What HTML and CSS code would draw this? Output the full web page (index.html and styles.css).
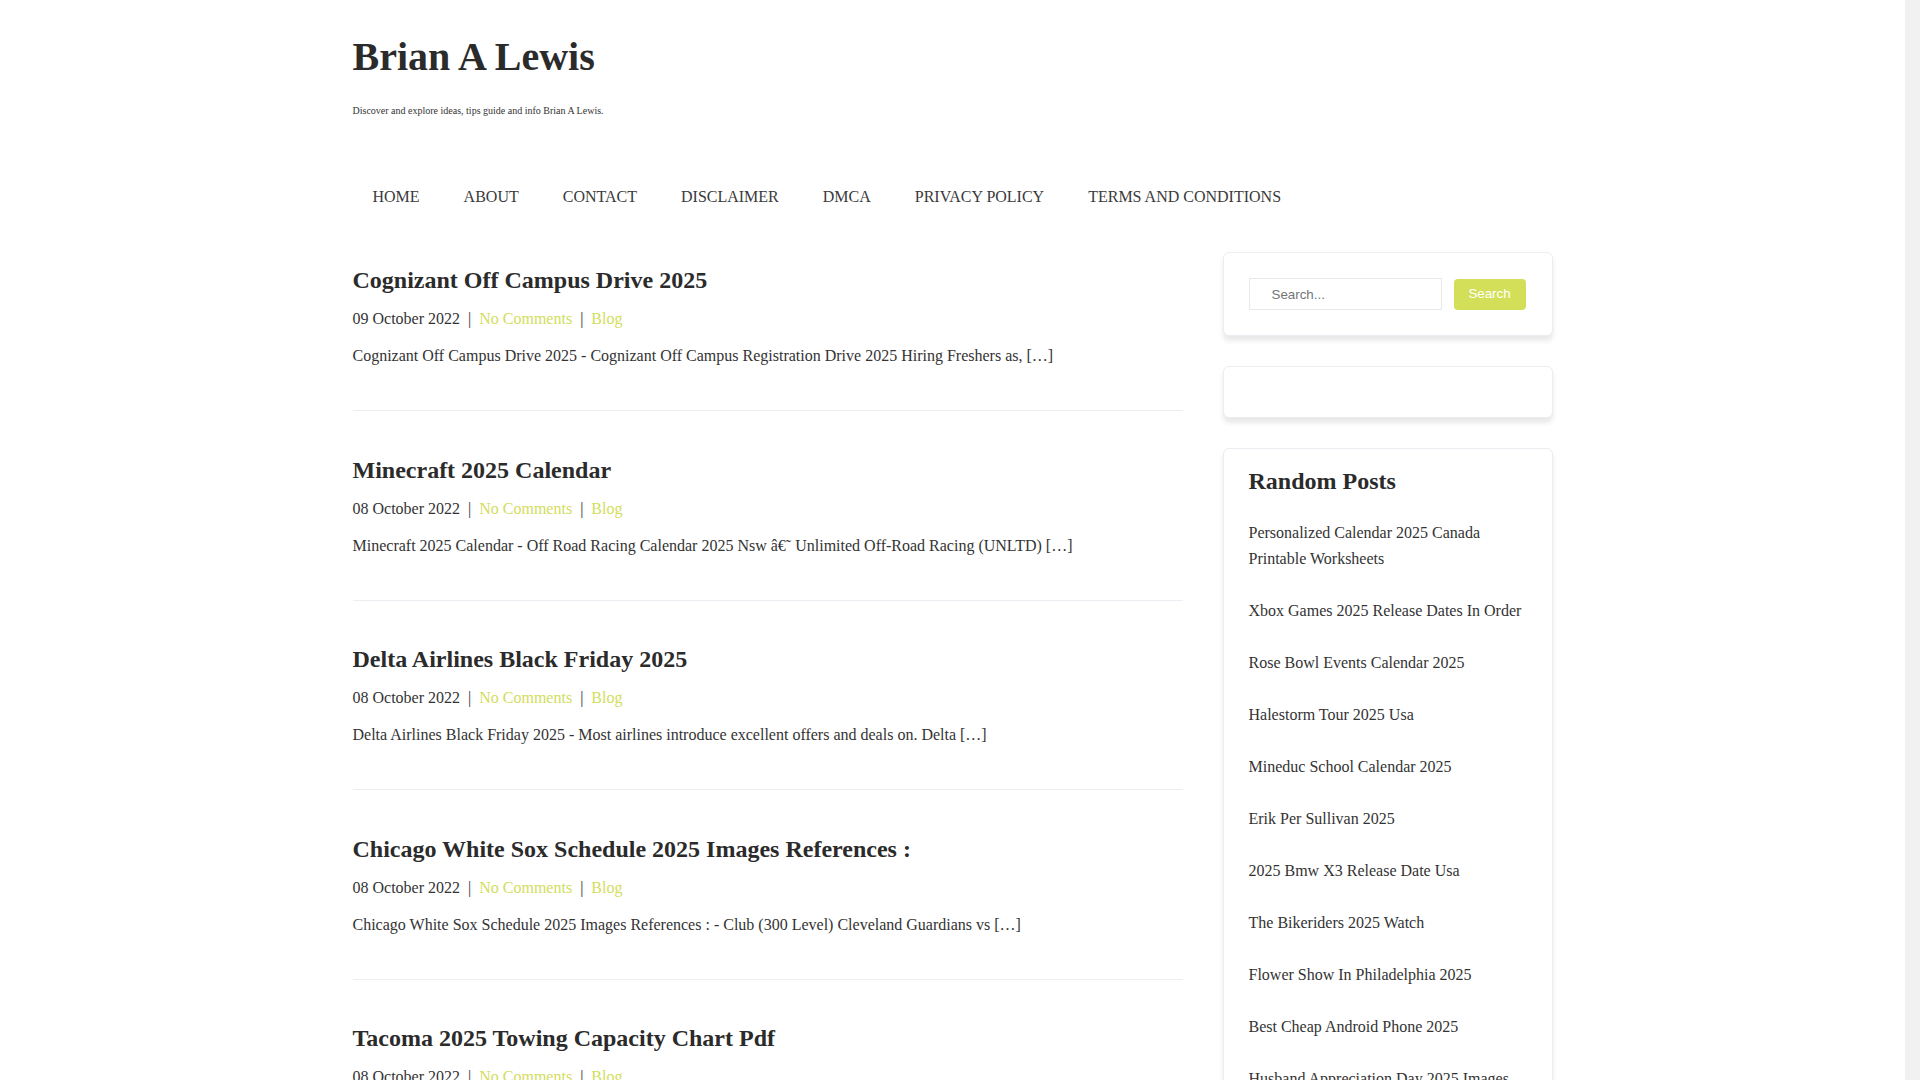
FILE: index.html
```html
<!DOCTYPE html>
<html lang="en">
<head>
<meta charset="utf-8">
<title>Brian A Lewis</title>
<link rel="stylesheet" href="styles.css">
</head>
<body>
<div class="page">
<div class="container">
  <header class="site-header">
    <h1 class="site-title">Brian A Lewis</h1>
    <p class="tagline">Discover and explore ideas, tips guide and info Brian A Lewis.</p>
    <nav class="main-nav">
      <a href="#">HOME</a>
      <a href="#">ABOUT</a>
      <a href="#">CONTACT</a>
      <a href="#">DISCLAIMER</a>
      <a href="#">DMCA</a>
      <a href="#">PRIVACY POLICY</a>
      <a href="#">TERMS AND CONDITIONS</a>
    </nav>
  </header>
  <div class="content">
    <main class="posts">
      <article class="post">
        <h2 class="post-title">Cognizant Off Campus Drive 2025</h2>
        <div class="post-meta"><span>09 October 2022</span><span class="sep">|</span><a href="#">No Comments</a><span class="sep">|</span><a href="#">Blog</a></div>
        <p class="excerpt">Cognizant Off Campus Drive 2025 - Cognizant Off Campus Registration Drive 2025 Hiring Freshers as, […]</p>
      </article>
      <article class="post">
        <h2 class="post-title">Minecraft 2025 Calendar</h2>
        <div class="post-meta"><span>08 October 2022</span><span class="sep">|</span><a href="#">No Comments</a><span class="sep">|</span><a href="#">Blog</a></div>
        <p class="excerpt">Minecraft 2025 Calendar - Off Road Racing Calendar 2025 Nsw â€˜ Unlimited Off-Road Racing (UNLTD) […]</p>
      </article>
      <article class="post">
        <h2 class="post-title">Delta Airlines Black Friday 2025</h2>
        <div class="post-meta"><span>08 October 2022</span><span class="sep">|</span><a href="#">No Comments</a><span class="sep">|</span><a href="#">Blog</a></div>
        <p class="excerpt">Delta Airlines Black Friday 2025 - Most airlines introduce excellent offers and deals on. Delta […]</p>
      </article>
      <article class="post">
        <h2 class="post-title">Chicago White Sox Schedule 2025 Images References :</h2>
        <div class="post-meta"><span>08 October 2022</span><span class="sep">|</span><a href="#">No Comments</a><span class="sep">|</span><a href="#">Blog</a></div>
        <p class="excerpt">Chicago White Sox Schedule 2025 Images References : - Club (300 Level) Cleveland Guardians vs […]</p>
      </article>
      <article class="post">
        <h2 class="post-title">Tacoma 2025 Towing Capacity Chart Pdf</h2>
        <div class="post-meta"><span>08 October 2022</span><span class="sep">|</span><a href="#">No Comments</a><span class="sep">|</span><a href="#">Blog</a></div>
        <p class="excerpt">Tacoma 2025 Towing Capacity Chart Pdf […]</p>
      </article>
    </main>
    <aside class="sidebar">
      <div class="widget">
        <form class="search-form">
          <input class="search-input" type="text" placeholder="Search...">
          <button class="search-btn" type="button">Search</button>
        </form>
      </div>
      <div class="widget"></div>
      <div class="widget widget-list">
        <h3 class="widget-title">Random Posts</h3>
        <ul class="random-list">
          <li><a href="#">Personalized Calendar 2025 Canada Printable Worksheets</a></li>
          <li><a href="#">Xbox Games 2025 Release Dates In Order</a></li>
          <li><a href="#">Rose Bowl Events Calendar 2025</a></li>
          <li><a href="#">Halestorm Tour 2025 Usa</a></li>
          <li><a href="#">Mineduc School Calendar 2025</a></li>
          <li><a href="#">Erik Per Sullivan 2025</a></li>
          <li><a href="#">2025 Bmw X3 Release Date Usa</a></li>
          <li><a href="#">The Bikeriders 2025 Watch</a></li>
          <li><a href="#">Flower Show In Philadelphia 2025</a></li>
          <li><a href="#">Best Cheap Android Phone 2025</a></li>
          <li><a href="#">Husband Appreciation Day 2025 Images</a></li>
        </ul>
      </div>
    </aside>
  </div>
</div>
</div>
<div class="scrollbar"></div>
</body>
</html>
```
FILE: styles.css
```css
html, body {
  margin: 0;
  padding: 0;
  background: #ffffff;
}
body {
  font-family: "Liberation Serif", "Times New Roman", serif;
  color: #333333;
  font-size: 16px;
}
a {
  text-decoration: none;
}
.page {
  padding-right: 15px;
}
.container {
  width: 1200px;
  margin: 0 auto;
}
.scrollbar {
  position: fixed;
  top: 0;
  right: 0;
  width: 15px;
  height: 100vh;
  background: #f1f1f1;
}
.site-header {
  padding-top: 33px;
}
.site-title {
  margin: 0;
  font-size: 40px;
  line-height: 48px;
  font-weight: 700;
  color: #2b2b2b;
}
.tagline {
  margin: 23px 0 0;
  font-size: 10px;
  line-height: 14px;
  color: #333;
}
.main-nav {
  display: flex;
  gap: 4px;
  margin-top: 67px;
}
.main-nav a {
  padding: 0 20px;
  line-height: 24px;
  font-size: 16px;
  color: #3a3a3a;
}
.content {
  display: flex;
  gap: 40px;
  margin-top: 43px;
  align-items: flex-start;
}
.posts {
  flex: 0 0 830px;
  padding-top: 13px;
}
.post {
  padding-bottom: 42px;
  border-bottom: 1px solid #ececf3;
  margin-bottom: 43.5px;
}
.post-title {
  margin: 0;
  font-size: 24px;
  line-height: 30px;
  font-weight: 700;
  color: #2b2b2b;
}
.post-meta {
  margin-top: 12px;
  line-height: 24px;
  font-size: 16px;
  color: #333;
}
.post-meta a {
  color: #d2dd5c;
}
.sep {
  margin: 0 8px;
  color: #333;
}
.excerpt {
  margin: 13px 0 0;
  line-height: 24px;
  font-size: 16px;
  color: #333;
}
.sidebar {
  flex: 0 0 330px;
}
.widget {
  box-sizing: border-box;
  border: 1px solid #ececf2;
  border-radius: 6px;
  padding: 25px;
  margin-bottom: 30px;
  background: #fff;
  box-shadow: 0 5px 5px rgba(0, 0, 0, 0.09);
  min-height: 52px;
}
.search-form {
  display: flex;
  gap: 12px;
  align-items: center;
}
.search-input {
  box-sizing: border-box;
  width: 193px;
  height: 32px;
  border: 1px solid #e8e8e8;
  border-radius: 0;
  padding: 0 0 0 22px;
  font-family: "Liberation Sans", Arial, sans-serif;
  font-size: 13.333px;
  color: #333;
  outline: none;
}
.search-input::placeholder {
  color: #757575;
}
.search-btn {
  box-sizing: border-box;
  width: 72px;
  height: 31px;
  border: none;
  border-radius: 4px;
  background: #d4df59;
  color: #ffffff;
  font-family: "Liberation Sans", Arial, sans-serif;
  font-size: 13.333px;
  padding: 0 0 2px;
}
.widget-list {
  padding-top: 19px;
}
.widget-title {
  margin: 0 0 13px;
  font-size: 24px;
  line-height: 26px;
  font-weight: 700;
  color: #2b2b2b;
}
.random-list {
  list-style: none;
  margin: 0;
  padding: 0;
}
.random-list li {
  padding: 13px 0;
  line-height: 26px;
  font-size: 16px;
}
.random-list a {
  color: #333;
}
```
